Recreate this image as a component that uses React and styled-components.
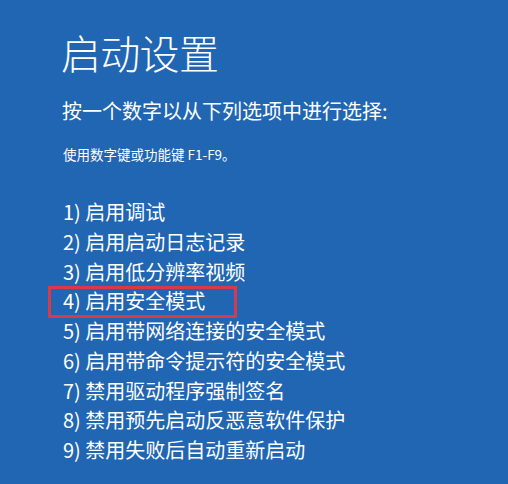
import React from 'react';
import styled, { createGlobalStyle } from 'styled-components';

const GlobalStyle = createGlobalStyle`
  html, body {
    margin: 0;
    padding: 0;
    background: #2166b2;
  }
`;

const options = [
  '启用调试',
  '启用启动日志记录',
  '启用低分辨率视频',
  '启用安全模式',
  '启用带网络连接的安全模式',
  '启用带命令提示符的安全模式',
  '禁用驱动程序强制签名',
  '禁用预先启动反恶意软件保护',
  '禁用失败后自动重新启动',
];

const App = () => (
  <Screen>
    <GlobalStyle />
    <Title>启动设置</Title>
    <Prompt>按一个数字以从下列选项中进行选择:</Prompt>
    <Hint>使用数字键或功能键 F1-F9。</Hint>
    <OptionList>
      {options.map((text, i) => (
        <Option key={i} $marked={i === 3}>
          {i + 1}) {text}
        </Option>
      ))}
    </OptionList>
  </Screen>
);

const Screen = styled.div`
  width: 508px;
  height: 484px;
  box-sizing: border-box;
  padding: 28px 0 0 61px;
  background: #2166b2;
  color: #fff;
  font-family: "Noto Sans CJK SC", "Noto Sans", sans-serif;
  overflow: hidden;
`;

const Title = styled.h1`
  margin: 0;
  font-size: 40px;
  font-weight: 300;
  line-height: 48px;
  letter-spacing: -0.7px;
`;

const Prompt = styled.p`
  margin: 21px 0 0 1px;
  font-size: 20px;
  font-weight: 400;
  line-height: 28px;
`;

const Hint = styled.p`
  margin: 18px 0 0 2px;
  font-size: 13.5px;
  line-height: 22px;
`;

const OptionList = styled.ul`
  list-style: none;
  margin: 32px 0 0 2px;
  padding: 0;
`;

const Option = styled.li`
  position: relative;
  font-size: 20px;
  line-height: 29.75px;
  white-space: nowrap;

  ${({ $marked }) => $marked && `
    &::after {
      content: "";
      position: absolute;
      left: -15px;
      top: 0;
      width: 189px;
      height: 32px;
      box-sizing: border-box;
      border: 3px solid #d83a47;
    }
  `}
`;

export default App;
